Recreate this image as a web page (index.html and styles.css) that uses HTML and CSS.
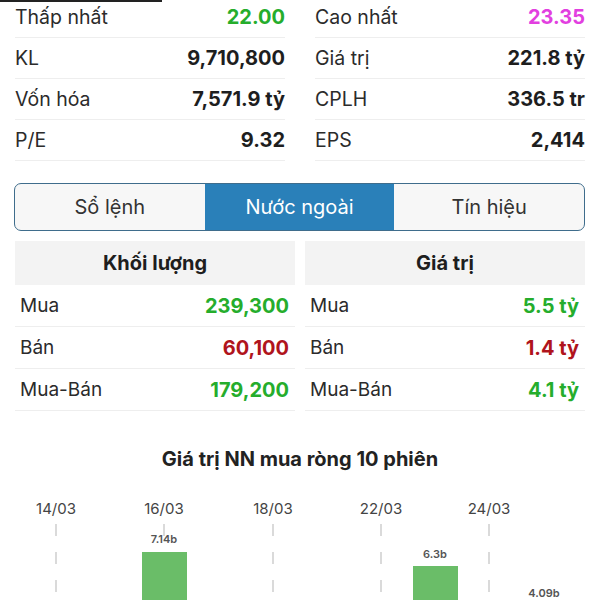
FILE: index.html
```html
<!DOCTYPE html>
<html lang="vi">
<head>
  <meta charset="UTF-8" />
  <meta name="viewport" content="width=device-width, initial-scale=1.0" />
  <title>Nước ngoài</title>
  <link rel="stylesheet" href="styles.css">
</head>
<body>
  <div class="top-line"></div>

  <div class="stats">
    <div class="stat-col">
      <div class="stat-row"><span class="label">Thấp nhất</span><span class="value green">22.00</span></div>
      <div class="stat-row"><span class="label">KL</span><span class="value">9,710,800</span></div>
      <div class="stat-row"><span class="label">Vốn hóa</span><span class="value">7,571.9 tỷ</span></div>
      <div class="stat-row"><span class="label">P/E</span><span class="value">9.32</span></div>
    </div>
    <div class="stat-col">
      <div class="stat-row"><span class="label">Cao nhất</span><span class="value pink">23.35</span></div>
      <div class="stat-row"><span class="label">Giá trị</span><span class="value">221.8 tỷ</span></div>
      <div class="stat-row"><span class="label">CPLH</span><span class="value">336.5 tr</span></div>
      <div class="stat-row"><span class="label">EPS</span><span class="value">2,414</span></div>
    </div>
  </div>

  <div class="tabs">
    <div class="tab">Sổ lệnh</div>
    <div class="tab active">Nước ngoài</div>
    <div class="tab">Tín hiệu</div>
  </div>

  <div class="foreign">
    <div class="foreign-col">
      <div class="foreign-head">Khối lượng</div>
      <div class="foreign-row"><span class="label">Mua</span><span class="value green">239,300</span></div>
      <div class="foreign-row"><span class="label">Bán</span><span class="value red">60,100</span></div>
      <div class="foreign-row"><span class="label">Mua-Bán</span><span class="value green">179,200</span></div>
    </div>
    <div class="foreign-col">
      <div class="foreign-head">Giá trị</div>
      <div class="foreign-row"><span class="label">Mua</span><span class="value green">5.5 tỷ</span></div>
      <div class="foreign-row"><span class="label">Bán</span><span class="value red">1.4 tỷ</span></div>
      <div class="foreign-row"><span class="label">Mua-Bán</span><span class="value green">4.1 tỷ</span></div>
    </div>
  </div>

  <div class="chart">
    <h3 class="chart-title">Giá trị NN mua ròng 10 phiên</h3>
    <svg class="chart-svg" width="600" height="110" viewBox="0 490 600 110">
      <g class="dates">
        <text x="56" y="513">14/03</text>
        <text x="164" y="513">16/03</text>
        <text x="273" y="513">18/03</text>
        <text x="381" y="513">22/03</text>
        <text x="489" y="513">24/03</text>
      </g>
      <g class="grid">
        <line x1="56" y1="523" x2="56" y2="600" />
        <line x1="164" y1="523" x2="164" y2="600" />
        <line x1="273" y1="523" x2="273" y2="600" />
        <line x1="381" y1="523" x2="381" y2="600" />
        <line x1="489" y1="523" x2="489" y2="600" />
      </g>
      <g class="bars">
        <rect x="142" y="551" width="45" height="60" />
        <rect x="413" y="565" width="45" height="46" />
      </g>
      <g class="bar-labels">
        <text x="164" y="542">7.14b</text>
        <text x="435" y="557">6.3b</text>
        <text x="544" y="596">4.09b</text>
      </g>
    </svg>
  </div>
</body>
</html>
```

FILE: styles.css
```css
body {
  margin: 0;
  padding: 0;
  background: #ffffff;
  color: #222222;
  font-family: Inter, "Noto Sans", sans-serif;
  overflow: hidden;
}

.top-line {
  width: 162px;
  height: 2px;
  background: #222222;
}

.stats {
  display: grid;
  grid-template-columns: 1fr 1fr;
  gap: 30px;
  padding: 0 15px;
  margin-top: -5px;
}

.stat-row {
  display: flex;
  justify-content: space-between;
  align-items: center;
  height: 40px;
  border-bottom: 1px solid #eeeeee;
  font-size: 19.5px;
}

.label {
  color: #2b2b2b;
}

.value {
  font-size: 20px;
  font-weight: 700;
  color: #1e1e1e;
}

.green {
  color: #25ad2c;
}

.pink {
  color: #e23fe0;
}

.red {
  color: #b0141c;
}

.tabs {
  display: grid;
  grid-template-columns: 1fr 1fr 1fr;
  margin: 22px 15px 0 14px;
  height: 46px;
  border: 1.5px solid #3f6d8c;
  border-radius: 7px;
  overflow: hidden;
  background: #f7f7f7;
}

.tab {
  display: flex;
  align-items: center;
  justify-content: center;
  font-size: 20px;
  color: #333333;
}

.tab.active {
  background: #2a80b9;
  color: #ffffff;
}

.foreign {
  display: grid;
  grid-template-columns: 1fr 1fr;
  gap: 10px;
  padding: 0 15px;
  margin-top: 10px;
}

.foreign-head {
  display: flex;
  align-items: center;
  justify-content: center;
  height: 44px;
  background: #f3f3f3;
  font-size: 20px;
  font-weight: 700;
  color: #1e1e1e;
}

.foreign-row {
  display: flex;
  justify-content: space-between;
  align-items: center;
  height: 41px;
  padding: 0 6px 0 5px;
  border-bottom: 1px solid #eeeeee;
  font-size: 19px;
}

.chart {
  margin-top: 36px;
}

.chart-title {
  margin: 0;
  text-align: center;
  font-size: 20px;
  font-weight: 700;
  color: #222222;
}

.chart-svg {
  display: block;
  margin-top: 20px;
}

.dates text {
  font-family: Inter, "Noto Sans", sans-serif;
  font-size: 15px;
  fill: #444444;
  text-anchor: middle;
}

.grid line {
  stroke: #b5b5b5;
  stroke-width: 1;
  stroke-dasharray: 12 16;
}

.bars rect {
  fill: #6abd68;
}

.bar-labels text {
  font-family: Inter, "Noto Sans", sans-serif;
  font-size: 11px;
  font-weight: 600;
  fill: #555555;
  text-anchor: middle;
}
```
